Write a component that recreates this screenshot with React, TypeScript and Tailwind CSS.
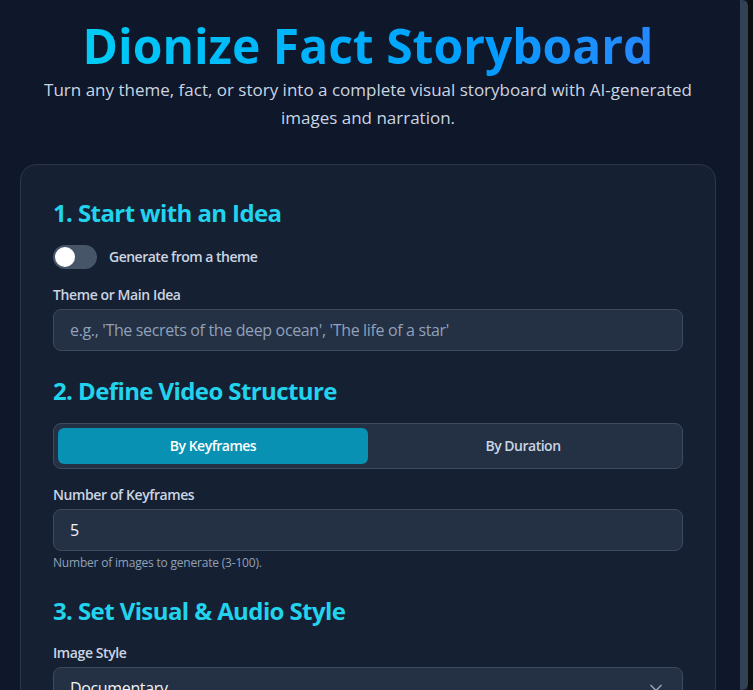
import { useState } from 'react';
import { ChevronDown } from 'lucide-react';

const font = { fontFamily: '"Open Sans", "Noto Sans", sans-serif' };

function SectionTitle({ children }: { children: React.ReactNode }) {
  return <h2 className="text-2xl font-bold tracking-[-0.6px] text-[#22d3ee] mb-4">{children}</h2>;
}

function Label({ children }: { children: React.ReactNode }) {
  return <label className="block text-sm font-semibold tracking-[-0.4px] text-slate-300 mb-1">{children}</label>;
}

export default function App() {
  const [fromTheme, setFromTheme] = useState(false);
  const [mode, setMode] = useState<'keyframes' | 'duration'>('keyframes');
  const [keyframes, setKeyframes] = useState('5');

  return (
    <div className="flex h-screen overflow-hidden bg-[#0f172a]" style={font}>
      <div className="flex-1 min-w-0 overflow-hidden px-5 pt-[22px]">
        <header className="text-center mb-8">
          <h1 className="text-5xl font-bold leading-none bg-gradient-to-r from-cyan-400 to-blue-500 bg-clip-text text-transparent pb-1.5">
            Dionize Fact Storyboard
          </h1>
          <p className="text-[17px] leading-7 text-slate-300 max-w-[680px] mx-auto">
            Turn any theme, fact, or story into a complete visual storyboard with{' '}
            <span className="whitespace-nowrap">AI-generated</span> images and narration.
          </p>
        </header>

        <div className="rounded-2xl border border-[#2b3648] bg-[#162033] p-8 space-y-6">
          <section>
            <SectionTitle>1. Start with an Idea</SectionTitle>
            <div className="flex items-center gap-3 mb-4">
              <button
                onClick={() => setFromTheme(!fromTheme)}
                className={`relative w-11 h-6 rounded-full transition-colors ${fromTheme ? 'bg-cyan-600' : 'bg-[#475569]'}`}
              >
                <span className={`absolute top-0.5 left-0.5 w-5 h-5 rounded-full bg-white transition-transform ${fromTheme ? 'translate-x-5' : ''}`} />
              </button>
              <span className="text-sm font-semibold tracking-[-0.5px] text-slate-300">Generate from a theme</span>
            </div>
            <Label>Theme or Main Idea</Label>
            <input
              className="w-full rounded-lg border border-[#3e4a5d] bg-[#243044] px-4 py-2 text-base tracking-[-0.35px] text-slate-100 placeholder:text-slate-400 outline-none"
              placeholder="e.g., 'The secrets of the deep ocean', 'The life of a star'"
            />
          </section>

          <section>
            <SectionTitle>2. Define Video Structure</SectionTitle>
            <div className="grid grid-cols-2 rounded-lg border border-[#3e4a5d] bg-[#243044] p-1 mb-4">
              <button
                onClick={() => setMode('keyframes')}
                className={`h-9 rounded-md text-sm font-semibold tracking-[-0.5px] ${mode === 'keyframes' ? 'bg-[#0891b2] text-white' : 'text-slate-300'}`}
              >
                By Keyframes
              </button>
              <button
                onClick={() => setMode('duration')}
                className={`h-9 rounded-md text-sm font-semibold tracking-[-0.5px] ${mode === 'duration' ? 'bg-[#0891b2] text-white' : 'text-slate-300'}`}
              >
                By Duration
              </button>
            </div>
            <Label>Number of Keyframes</Label>
            <input
              value={keyframes}
              onChange={(e) => setKeyframes(e.target.value)}
              className="w-full rounded-lg border border-[#3e4a5d] bg-[#243044] px-4 py-2 text-base text-slate-100 outline-none"
            />
            <p className="text-xs tracking-[-0.2px] text-slate-400 mt-1">Number of images to generate (3-100).</p>
          </section>

          <section>
            <SectionTitle>3. Set Visual &amp; Audio Style</SectionTitle>
            <Label>Image Style</Label>
            <div className="flex items-center justify-between rounded-lg border border-[#3e4a5d] bg-[#243044] px-4 py-2 text-base tracking-[-0.35px] text-slate-100">
              <span>Documentary</span>
              <ChevronDown className="w-5 h-5 text-slate-400" />
            </div>
          </section>
        </div>
      </div>
      <div className="flex w-[17px] shrink-0">
        <div className="w-1" />
        <div className="w-2 bg-[#334155] rounded-r-md" />
        <div className="flex-1 bg-[#0c0d10]" />
      </div>
    </div>
  );
}
